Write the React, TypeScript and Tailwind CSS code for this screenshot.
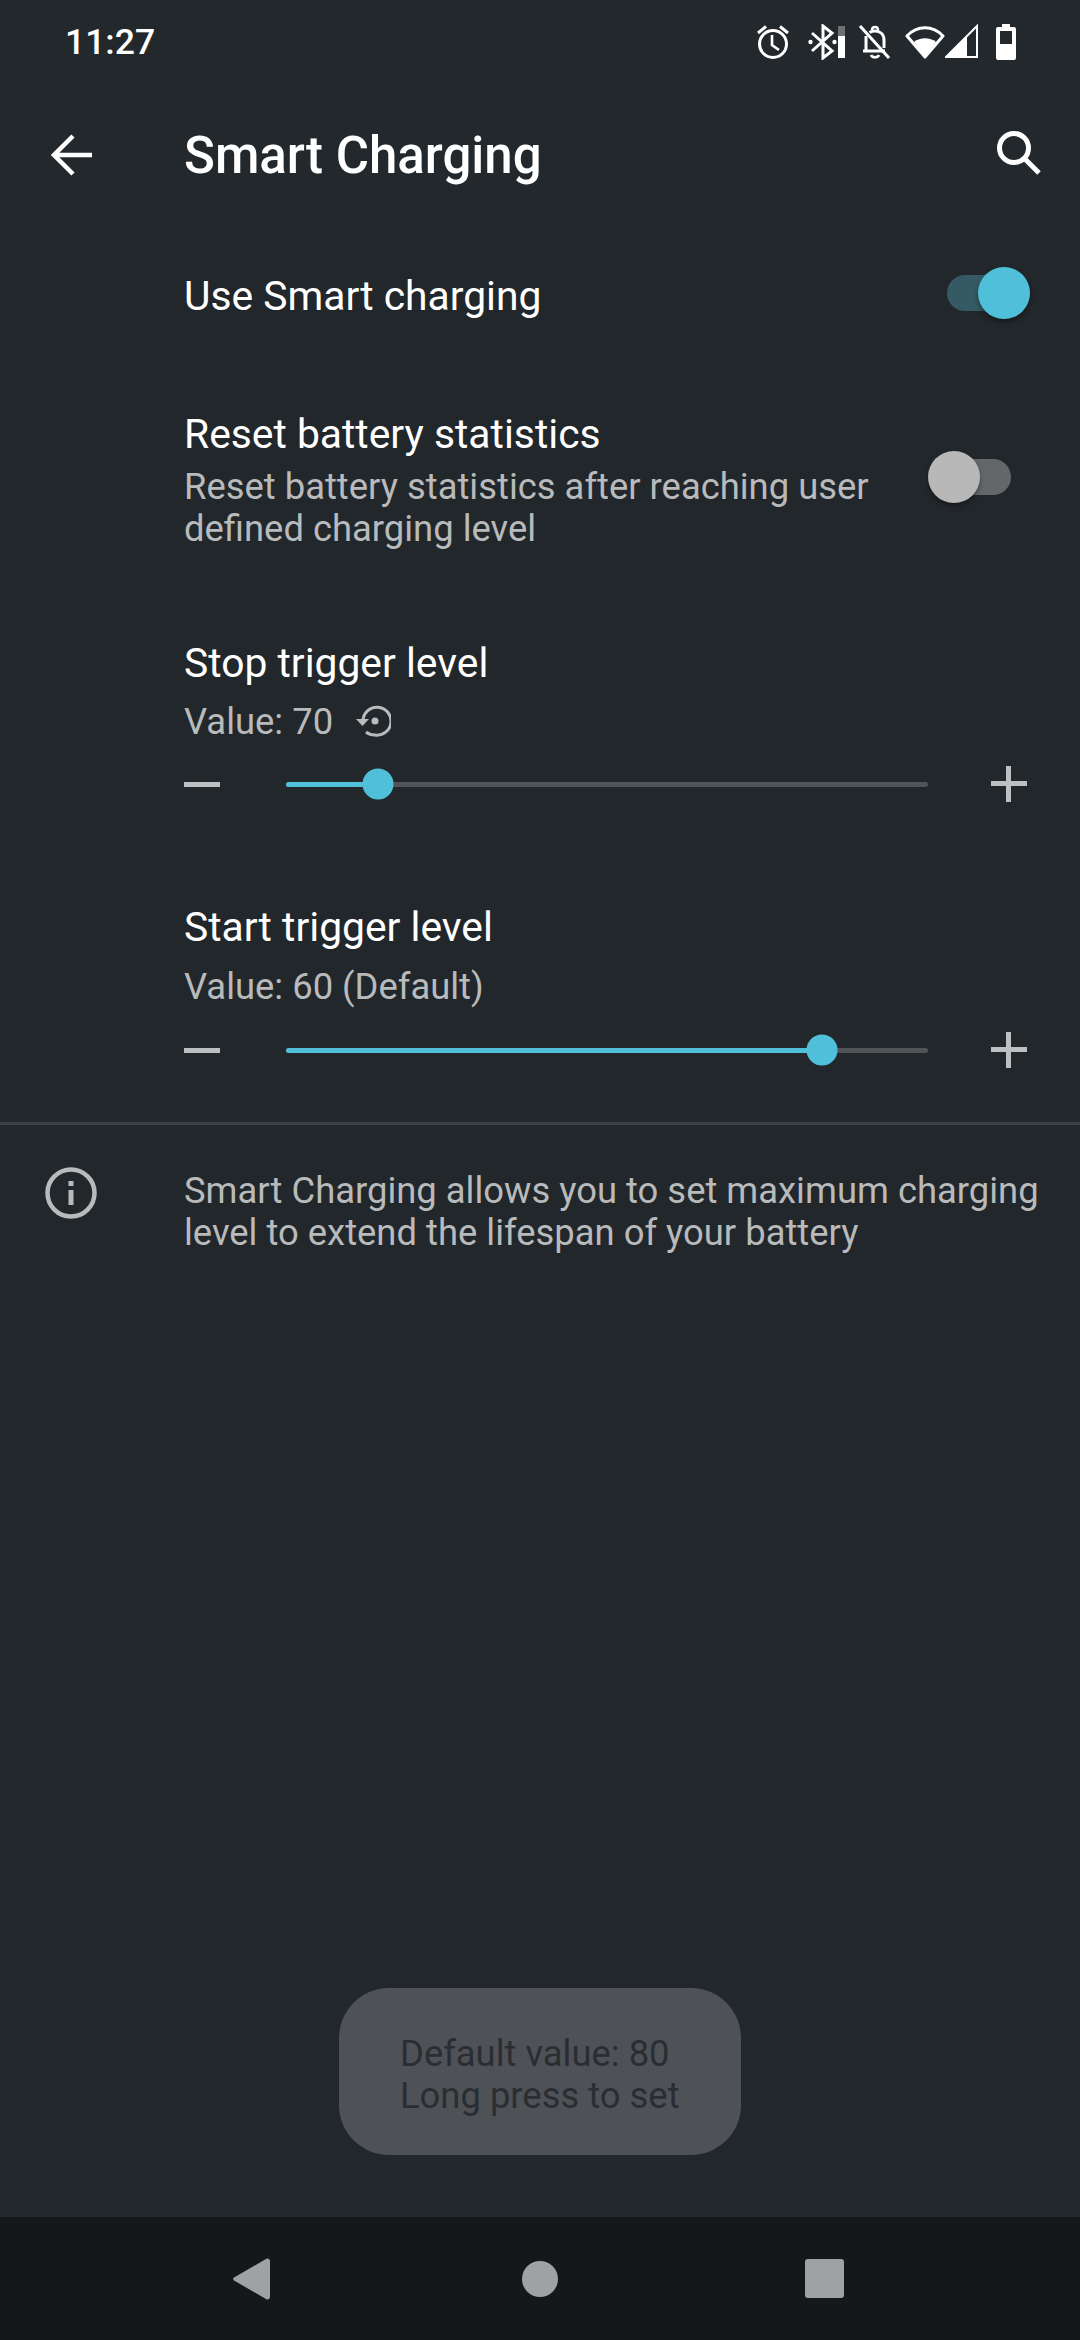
import React from 'react';

const font = { fontFamily: 'Roboto, sans-serif' };

const StatusIcons = () => (
  <div className="flex items-center">
    <svg width="32" height="36" viewBox="0 0 32 36" fill="none" stroke="#fff" strokeWidth="3">
      <circle cx="16" cy="20" r="13.500" />
      <path d="M15 11v10l7 5" strokeWidth="2.600" />
      <path d="M1 9l8-6.500M31 9l-8-6.500" />
    </svg>
    <svg width="38" height="36" viewBox="0 0 38 36" fill="none" className="ml-[19px]">
      <path d="M4 9l20 18-9 7V2l9 7L4 27" stroke="#fff" strokeWidth="3" />
      <circle cx="2.500" cy="18" r="2.200" fill="#fff" />
      <circle cx="26.500" cy="18" r="2.200" fill="#fff" />
      <rect x="30" y="2" width="7" height="10" fill="#6d7073" />
      <rect x="30" y="12" width="7" height="22" fill="#fff" />
    </svg>
    <svg width="34" height="36" viewBox="0 0 34 36" fill="none" stroke="#fff" strokeWidth="3" className="ml-[12px]">
      <path d="M2 2l29 32" />
      <path d="M8 12v15M5 27h22M26 24V16c0-6-4-9-9-9-2 0-4 .5-5.500 1.500" />
      <path d="M14 6c0-4 6-4 6 0M13 31c1 3 7 3 8 0" strokeWidth="2.500" />
    </svg>
    <svg width="40" height="36" viewBox="0 0 40 36" className="ml-[13px]">
      <path d="M2 12C12 1 28 1 38 12L20 33z" fill="none" stroke="#fff" strokeWidth="3" strokeLinejoin="round" />
      <path d="M9 18c6-5 16-5 22 0L20 32z" fill="#fff" />
    </svg>
    <svg width="34" height="36" viewBox="0 0 34 36">
      <path d="M1 33L32 2v31z" fill="none" stroke="#fff" strokeWidth="2" />
      <path d="M1 33L22 12v21z" fill="#fff" />
    </svg>
    <svg width="20" height="36" viewBox="0 0 20 36" className="ml-[17px]">
      <path d="M6 0h8v3h4a2 2 0 0 1 2 2v29a2 2 0 0 1-2 2H2a2 2 0 0 1-2-2V5a2 2 0 0 1 2-2h4z" fill="#fff" />
      <rect x="4" y="7" width="12" height="13" fill="#23282c" />
    </svg>
  </div>
);

const Switch = ({ on }: { on: boolean }) => (
  <div className="relative h-[36px] w-[73px] rounded-full" style={{ backgroundColor: on ? '#355a64' : '#63676a' }}>
    <div
      className={
        on
          ? 'absolute -top-[8px] right-[-10px] h-[52px] w-[52px] rounded-full bg-[#50c0da] shadow-[0_3px_5px_rgba(0,0,0,0.35)]'
          : 'absolute -top-[8px] left-[-10px] h-[52px] w-[52px] rounded-full bg-[#b8b8b8] shadow-[0_3px_5px_rgba(0,0,0,0.35)]'
      }
    />
  </div>
);

const SliderRow = ({ percent }: { percent: number }) => (
  <div className="flex h-[42px] items-center">
    <div className="h-[5px] w-[36px] bg-[#bdbfc0]" />
    <div className="relative ml-[66px] h-[5px] w-[642px] rounded-full bg-[#505457]">
      <div className="h-full rounded-full bg-[#50c0da]" style={{ width: `${percent}%` }} />
      <div
        className="absolute top-1/2 h-[31px] w-[31px] -translate-x-1/2 -translate-y-1/2 rounded-full bg-[#50c0da]"
        style={{ left: `${percent}%` }}
      />
    </div>
    <div className="relative ml-[63px] h-[36px] w-[36px]">
      <div className="absolute left-0 top-[15px] h-[5px] w-[36px] bg-[#bdbfc0]" />
      <div className="absolute left-[15px] top-0 h-[36px] w-[5px] bg-[#bdbfc0]" />
    </div>
  </div>
);

export default function App() {
  return (
    <div className="relative flex h-[2340px] w-[1080px] flex-col overflow-hidden bg-[#23282c]" style={font}>
      <div className="flex h-[84px] items-center justify-between pl-[65px] pr-[64px]">
        <span className="text-[35.5px] font-medium leading-[44px] text-white">11:27</span>
        <StatusIcons />
      </div>

      <div className="flex h-[141px] items-center">
        <svg width="42" height="42" viewBox="0 0 42 42" fill="none" stroke="#fff" strokeWidth="4.500" className="ml-[51px]">
          <path d="M41 21H4M22 2L3 21l19 19" />
        </svg>
        <h1 className="ml-[91px] mt-[2px] text-[51px] font-medium leading-[56px] text-white">Smart Charging</h1>
        <svg width="46" height="46" viewBox="0 0 46 46" fill="none" stroke="#fff" strokeWidth="5" className="ml-auto mr-[38px] mb-[4px]">
          <circle cx="18" cy="18" r="14.500" />
          <path d="M28 28l15 15" />
        </svg>
      </div>

      <div className="flex-1 bg-[#22272b] text-[#b8babb]">
        <div className="flex h-[140px] items-center justify-between pl-[184px] pr-[60px]">
          <span className="mt-[2px] text-[40.8px] leading-[48px] text-white">Use Smart charging</span>
          <div className="mb-[4px]">
            <Switch on />
          </div>
        </div>

        <div className="flex items-start justify-between pl-[184px] pr-[69px] pt-[45px]">
          <div className="w-[720px]">
            <div className="text-[40.8px] leading-[48px] text-white">Reset battery statistics</div>
            <div className="mt-[8px] text-[36.4px] leading-[42px]">
              Reset battery statistics after reaching user defined charging level
            </div>
          </div>
          <div className="mt-[49px]">
            <Switch on={false} />
          </div>
        </div>

        <div className="pl-[184px] pt-[89px]">
          <div className="text-[40.8px] leading-[48px] text-white">Stop trigger level</div>
          <div className="mt-[14px] flex items-center text-[36.4px] leading-[42px]">
            <span>Value: 70</span>
            <svg width="36" height="34" viewBox="0 0 36 34" fill="none" stroke="#b8babb" strokeWidth="3" className="ml-[22px] -mt-[2px]">
              <path d="M8 17A14 14 0 1 1 20 31a14 14 0 0 1-9-3" />
              <path d="M1 15h13l-6.500 7z" fill="#b8babb" stroke="none" />
              <circle cx="20" cy="17" r="3.500" fill="#b8babb" stroke="none" />
            </svg>
          </div>
          <div className="mt-[20px]">
            <SliderRow percent={14.3} />
          </div>
        </div>

        <div className="pl-[184px] pt-[98px]">
          <div className="text-[40.8px] leading-[48px] text-white">Start trigger level</div>
          <div className="mt-[15px] text-[36.4px] leading-[42px]">Value: 60 (Default)</div>
          <div className="mt-[21px]">
            <SliderRow percent={83.5} />
          </div>
        </div>

        <div className="mt-[51px] h-[3px] bg-[#3c4144]" />

        <div className="mt-[45px] flex">
          <svg width="52" height="52" viewBox="0 0 52 52" fill="none" stroke="#b8babb" strokeWidth="4.500" className="ml-[45px] -mt-[3px] shrink-0">
            <circle cx="26" cy="26" r="23.500" />
            <rect x="23.500" y="14" width="5" height="5" fill="#b8babb" stroke="none" />
            <rect x="23.500" y="23" width="5" height="15" fill="#b8babb" stroke="none" />
          </svg>
          <div className="ml-[87px] w-[870px] text-[36.4px] leading-[42px]">
            Smart Charging allows you to set maximum charging level to extend the lifespan of your battery
          </div>
        </div>
      </div>

      <div className="absolute left-[339px] top-[1988px] flex h-[167px] w-[402px] flex-col justify-center rounded-[50px] bg-[#4e5256] pl-[61px] pt-[6px] text-[36.4px] leading-[42px] text-[#2a2e32]">
        <div>Default value: 80</div>
        <div>Long press to set</div>
      </div>

      <div className="flex h-[123px] items-center bg-[#14181b] pl-[233px]">
        <svg width="37" height="42" viewBox="0 0 37 42">
          <path d="M33 1a2.500 2.500 0 0 1 4 2v36a2.500 2.500 0 0 1-4 2L1 22.500a2 2 0 0 1 0-3z" fill="#a0a1a3" />
        </svg>
        <div className="ml-[252px] h-[36px] w-[36px] rounded-full bg-[#a0a1a3]" />
        <div className="ml-[247px] h-[39px] w-[39px] rounded-[3px] bg-[#a0a1a3]" />
      </div>
    </div>
  );
}
